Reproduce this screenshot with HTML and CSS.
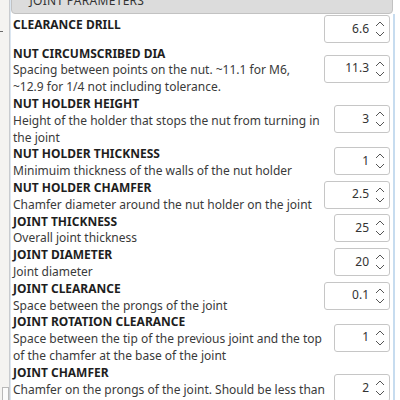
FILE: index.html
```html
<!DOCTYPE html>
<html>
<head>
<meta charset="utf-8">
<link rel="stylesheet" href="styles.css">
</head>
<body>
<div class="app">
  <div class="side"><div class="tick"></div><div class="side-fill"></div><div class="side-box"></div></div>
  <div class="panel">
    <div class="header"><span class="chev">˅</span> JOINT PARAMETERS</div>
    <div class="rows">
      <div class="row">
        <div class="label"><div class="title">CLEARANCE DRILL</div></div>
        <div class="spin wide"><span class="val">6.6</span><svg class="arrows" width="10" height="16" viewBox="0 0 10 16"><path d="M1 5 L5 1 L9 5 M1 11 L5 15 L9 11"/></svg></div>
      </div>
      <div class="row">
        <div class="label"><div class="title">NUT CIRCUMSCRIBED DIA</div><div class="desc">Spacing between points on the nut. ~11.1 for M6, ~12.9 for 1/4 not including tolerance.</div></div>
        <div class="spin wide"><span class="val">11.3</span><svg class="arrows" width="10" height="16" viewBox="0 0 10 16"><path d="M1 5 L5 1 L9 5 M1 11 L5 15 L9 11"/></svg></div>
      </div>
      <div class="row">
        <div class="label"><div class="title">NUT HOLDER HEIGHT</div><div class="desc">Height of the holder that stops the nut from turning in the joint</div></div>
        <div class="spin"><span class="val">3</span><svg class="arrows" width="10" height="16" viewBox="0 0 10 16"><path d="M1 5 L5 1 L9 5 M1 11 L5 15 L9 11"/></svg></div>
      </div>
      <div class="row">
        <div class="label"><div class="title">NUT HOLDER THICKNESS</div><div class="desc">Minimuim thickness of the walls of the nut holder</div></div>
        <div class="spin"><span class="val">1</span><svg class="arrows" width="10" height="16" viewBox="0 0 10 16"><path d="M1 5 L5 1 L9 5 M1 11 L5 15 L9 11"/></svg></div>
      </div>
      <div class="row">
        <div class="label"><div class="title">NUT HOLDER CHAMFER</div><div class="desc">Chamfer diameter around the nut holder on the joint</div></div>
        <div class="spin wide"><span class="val">2.5</span><svg class="arrows" width="10" height="16" viewBox="0 0 10 16"><path d="M1 5 L5 1 L9 5 M1 11 L5 15 L9 11"/></svg></div>
      </div>
      <div class="row">
        <div class="label"><div class="title">JOINT THICKNESS</div><div class="desc">Overall joint thickness</div></div>
        <div class="spin"><span class="val">25</span><svg class="arrows" width="10" height="16" viewBox="0 0 10 16"><path d="M1 5 L5 1 L9 5 M1 11 L5 15 L9 11"/></svg></div>
      </div>
      <div class="row">
        <div class="label"><div class="title">JOINT DIAMETER</div><div class="desc">Joint diameter</div></div>
        <div class="spin"><span class="val">20</span><svg class="arrows" width="10" height="16" viewBox="0 0 10 16"><path d="M1 5 L5 1 L9 5 M1 11 L5 15 L9 11"/></svg></div>
      </div>
      <div class="row">
        <div class="label"><div class="title">JOINT CLEARANCE</div><div class="desc">Space between the prongs of the joint</div></div>
        <div class="spin wide"><span class="val">0.1</span><svg class="arrows" width="10" height="16" viewBox="0 0 10 16"><path d="M1 5 L5 1 L9 5 M1 11 L5 15 L9 11"/></svg></div>
      </div>
      <div class="row">
        <div class="label"><div class="title">JOINT ROTATION CLEARANCE</div><div class="desc">Space between the tip of the previous joint and the top of the chamfer at the base of the joint</div></div>
        <div class="spin"><span class="val">1</span><svg class="arrows" width="10" height="16" viewBox="0 0 10 16"><path d="M1 5 L5 1 L9 5 M1 11 L5 15 L9 11"/></svg></div>
      </div>
      <div class="row">
        <div class="label"><div class="title">JOINT CHAMFER</div><div class="desc">Chamfer on the prongs of the joint. Should be less than the joint clearance</div></div>
        <div class="spin"><span class="val">2</span><svg class="arrows" width="10" height="16" viewBox="0 0 10 16"><path d="M1 5 L5 1 L9 5 M1 11 L5 15 L9 11"/></svg></div>
      </div>
    </div>
  </div>
  <div class="edge"></div>
</div>
</body>
</html>
```
FILE: styles.css
```css
html, body {
  margin: 0;
  padding: 0;
  background: #ffffff;
}
body {
  width: 400px;
  height: 400px;
  overflow: hidden;
  font-family: "Noto Sans", "Open Sans", sans-serif;
  font-size: 12px;
  line-height: 16.8px;
  color: #333333;
}
.app {
  display: flex;
  height: 400px;
}
.side {
  width: 9px;
  flex: none;
  background: #f4f3f1;
  border-right: 1px solid #c9ccd0;
  display: flex;
  flex-direction: column;
}
.tick {
  margin-top: 31px;
  width: 3px;
  height: 1px;
  background: #6a6a6a;
}
.side-fill {
  flex: 1;
}
.side-box {
  height: 12px;
  border: 1px solid #b8b8b8;
  border-bottom: none;
  margin-left: 2px;
  background: #fbfbfb;
}
.panel {
  flex: 1;
  background: #ffffff;
  border-left: 1px solid #dbe6f1;
  min-width: 0;
}
.edge {
  width: 2px;
  flex: none;
  background: #c7dcef;
  margin-right: 5px;
  margin-top: 14px;
}
.header {
  height: 22.6px;
  margin-top: -9px;
  background: #dcdcdc;
  border: 1px solid #c2c2c2;
  border-radius: 0 0 4px 4px;
  padding-left: 6px;
  box-sizing: border-box;
  line-height: 18px;
  color: #333333;
  letter-spacing: 0.3px;
}
.chev {
  display: inline-block;
  width: 8px;
}
.rows {
  padding: 1px 3px 0 2px;
}
.row {
  display: flex;
  align-items: center;
  min-height: 29px;
  gap: 6px;
}
.label {
  flex: 1;
  align-self: flex-start;
  min-width: 0;
  margin-top: 2px;
  margin-bottom: -2px;
}
.title {
  font-weight: 700;
  color: #1e1e1e;
}
.desc {
  color: #3a3a3a;
}
.spin {
  flex: none;
  width: 56px;
  height: 28px;
  box-sizing: border-box;
  border: 1px solid #c6c6c6;
  border-radius: 3px;
  display: flex;
  align-items: center;
  justify-content: flex-end;
  padding-right: 4px;
  background: #ffffff;
  color: #333333;
}
.spin.wide {
  width: 66px;
}
.val {
  margin-right: 6px;
}
.arrows path {
  fill: none;
  stroke: #555555;
  stroke-width: 1;
}
```
